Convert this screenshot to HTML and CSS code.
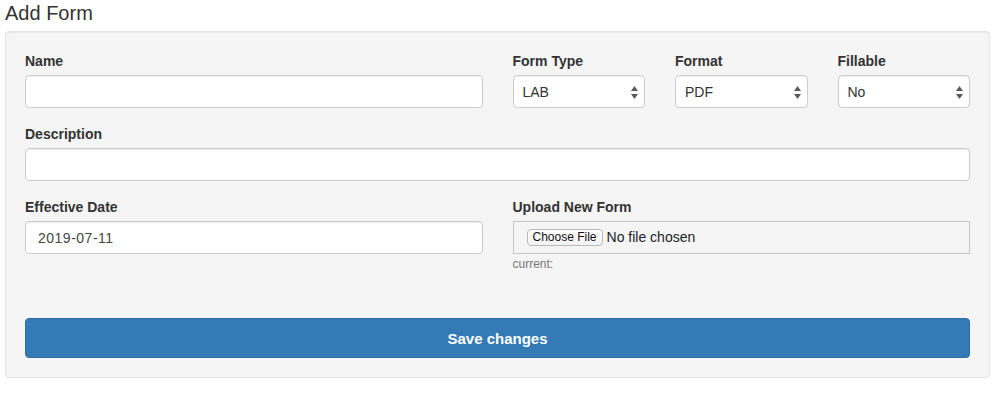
FILE: index.html
```html
<!DOCTYPE html>
<html>
<head>
<meta charset="utf-8">
<link rel="stylesheet" href="styles.css">
</head>
<body>
<div class="page">
  <h4 class="title">Add Form</h4>
  <div class="well">
    <div class="grid">
      <div class="group span6">
        <label class="lbl">Name</label>
        <div class="control"></div>
      </div>
      <div class="group span2">
        <label class="lbl">Form Type</label>
        <div class="control select"><span>LAB</span>
          <svg class="arrows" width="7" height="13" viewBox="0 0 7 13"><polygon points="0,5 3.5,0 7,5" /><polygon points="0,8 7,8 3.5,13" /></svg>
        </div>
      </div>
      <div class="group span2">
        <label class="lbl">Format</label>
        <div class="control select"><span>PDF</span>
          <svg class="arrows" width="7" height="13" viewBox="0 0 7 13"><polygon points="0,5 3.5,0 7,5" /><polygon points="0,8 7,8 3.5,13" /></svg>
        </div>
      </div>
      <div class="group span2">
        <label class="lbl">Fillable</label>
        <div class="control select"><span>No</span>
          <svg class="arrows" width="7" height="13" viewBox="0 0 7 13"><polygon points="0,5 3.5,0 7,5" /><polygon points="0,8 7,8 3.5,13" /></svg>
        </div>
      </div>

      <div class="group span12">
        <label class="lbl">Description</label>
        <div class="control"></div>
      </div>

      <div class="group span6">
        <label class="lbl">Effective Date</label>
        <div class="control date">2019-07-11</div>
      </div>
      <div class="group span6">
        <label class="lbl">Upload New Form</label>
        <div class="filebox"><span class="choose">Choose File</span><span class="nofile">No file chosen</span></div>
        <div class="help">current:</div>
      </div>

      <button class="save span12">Save changes</button>
    </div>
  </div>
</div>
</body>
</html>
```
FILE: styles.css
```css
html, body {
  margin: 0;
  padding: 0;
  background: #fff;
}
body {
  font-family: "Liberation Sans", Arial, Helvetica, sans-serif;
  font-size: 14px;
  color: #333;
}
.page {
  width: 985px;
  margin-left: 5px;
}
.title {
  margin: 2px 0 7px;
  font-size: 20px;
  line-height: 22px;
  font-weight: normal;
  color: #333;
}
.well {
  background: #f5f5f5;
  border: 1px solid #e3e3e3;
  border-radius: 4px;
  padding: 19px;
  box-shadow: inset 0 1px 1px rgba(0,0,0,0.05);
}
.grid {
  display: grid;
  grid-template-columns: repeat(12, 1fr);
  column-gap: 30px;
  row-gap: 16px;
  align-items: start;
}
.span6 { grid-column: span 6; }
.span2 { grid-column: span 2; }
.span12 { grid-column: span 12; }
.group {
  display: flex;
  flex-direction: column;
  min-width: 0;
}
.lbl {
  display: block;
  font-weight: bold;
  line-height: 20px;
  height: 20px;
  margin-bottom: 4px;
  color: #333;
}
.control {
  height: 33px;
  box-sizing: border-box;
  background: #fff;
  border: 1px solid #ccc;
  border-radius: 4px;
  box-shadow: inset 0 1px 1px rgba(0,0,0,0.075);
  display: flex;
  align-items: center;
  padding: 0 12px;
  color: #555;
}
.select {
  justify-content: space-between;
  padding: 0 6px 0 9px;
  color: #333;
}
.arrows {
  fill: #5a5a5a;
  margin-top: 1px;
}
.date {
  letter-spacing: 0.5px;
  color: #444;
}
.filebox {
  height: 33px;
  box-sizing: border-box;
  border: 1px solid #c6c6c6;
  background: #f5f5f5;
  display: flex;
  align-items: center;
  padding-left: 13px;
}
.choose {
  box-sizing: border-box;
  height: 17px;
  line-height: 15px;
  padding: 0 5px;
  border: 1px solid #b9b9b9;
  border-radius: 4px;
  background: linear-gradient(#ffffff, #f2f2f2);
  font-size: 12px;
  color: #111;
  margin-right: 4px;
}
.nofile {
  font-size: 14px;
  color: #222;
  margin-top: -2px;
}
.help {
  margin-top: 3px;
  font-size: 12px;
  line-height: 14px;
  color: #777;
}
.save {
  margin-top: 31px;
  height: 40px;
  border: 1px solid #2e6da4;
  border-radius: 4px;
  background: #337ab7;
  color: #fff;
  font-family: "Liberation Sans", Arial, Helvetica, sans-serif;
  font-size: 15px;
  font-weight: bold;
  padding: 0;
}
```
